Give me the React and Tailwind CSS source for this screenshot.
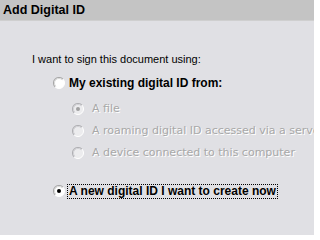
import React from "react";

function Radio({ checked, disabled }) {
  const fill = disabled ? "#ececee" : "#ffffff";
  const dot = disabled ? "#a0a0a0" : "#000000";
  return (
    <svg width="12" height="12" viewBox="0 0 12 12" className="shrink-0">
      <circle cx="6" cy="6" r="5.5" fill={fill} />
      <path d="M2.1 9.9 A5.5 5.5 0 0 0 9.9 2.1" fill="none" stroke="#ffffff" strokeWidth="1" />
      <path d="M2.1 9.9 A5.5 5.5 0 0 1 9.9 2.1" fill="none" stroke={disabled ? "#b0b0b4" : "#a8a8a8"} strokeWidth="1.1" />
      <path d="M2.8 9.2 A4.5 4.5 0 0 1 9.2 2.8" fill="none" stroke={disabled ? "#d0d0d4" : "#d8d8d8"} strokeWidth="1" />
      {checked && <circle cx="6" cy="6" r="2" fill={dot} />}
    </svg>
  );
}

export default function App() {
  const font = { fontFamily: '"Liberation Sans", Arial, sans-serif' };
  return (
    <div className="w-[314px] h-[235px] overflow-hidden bg-[#e0e0e4] text-black" style={font}>
      <div className="h-[21px] bg-[#c4c4c4] border-b border-[#cfcfcf] flex items-center pl-[3px] pt-[1px]">
        <span className="text-[12.5px] font-bold leading-none">Add Digital ID</span>
      </div>
      <div className="flex flex-col pt-[32px] pl-[32px] whitespace-nowrap">
        <div className="h-[13px] text-[11px] leading-[13px]">I want to sign this document using:</div>
        <div className="mt-[9px] h-[16px] flex items-center pl-[21px] gap-[4px]">
          <Radio />
          <span className="text-[12px] font-bold leading-[13px]">My existing digital ID from:</span>
        </div>
        <div className="mt-[7px] flex flex-col pl-[40px] text-[11px] text-[#a8a8a8] [text-shadow:1px_1px_0_#ffffff] font-['DejaVu_Sans',sans-serif]">
          <div className="h-[22px] flex items-center gap-[8px]">
            <Radio checked disabled />
            <span>A file</span>
          </div>
          <div className="h-[22px] flex items-center gap-[8px]">
            <Radio disabled />
            <span>A roaming digital ID accessed via a server</span>
          </div>
          <div className="h-[22px] flex items-center gap-[8px]">
            <Radio disabled />
            <span>A device connected to this computer</span>
          </div>
        </div>
        <div className="mt-[19px] h-[16px] flex items-center pl-[21px] gap-[2px]">
          <Radio checked />
          <span className="text-[12px] font-bold leading-[13px] border border-dotted border-black px-[1px]">A new digital ID I want to create now</span>
        </div>
      </div>
    </div>
  );
}
